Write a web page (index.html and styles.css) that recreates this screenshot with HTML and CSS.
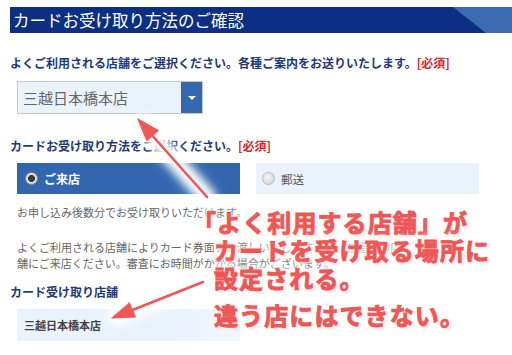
FILE: index.html
```html
<!DOCTYPE html>
<html lang="ja">
<head>
<meta charset="utf-8">
<title>カードお受け取り方法のご確認</title>
<link rel="stylesheet" href="styles.css">
</head>
<body>
<div class="page">
  <h1 class="title">カードお受け取り方法のご確認</h1>
  <p class="label q1">よくご利用される店舗をご選択ください。各種ご案内をお送りいたします。<span class="req">[必須]</span></p>
  <div class="select">
    <span class="select-text">三越日本橋本店</span>
    <span class="select-btn"><span class="caret"></span></span>
  </div>
  <p class="label q2">カードお受け取り方法をご選択ください。<span class="req">[必須]</span></p>
  <div class="radios">
    <div class="radio on"><span class="dot"></span><span>ご来店</span></div>
    <div class="radio off"><span class="dot"></span><span>郵送</span></div>
  </div>
  <p class="note">お申し込み後数分でお受け取りいただけます。</p>
  <p class="desc">よくご利用される店舗によりカード券面をお渡しいたしますので、ご指定の店<br>舗にご来店ください。審査にお時間がかかる場合がございます。</p>
  <p class="label q3">カード受け取り店舗</p>
  <div class="store">三越日本橋本店</div>

  <svg class="arrows" width="512" height="355" viewBox="0 0 512 355" aria-hidden="true">
    <defs>
      <filter id="glow" x="-50%" y="-50%" width="200%" height="200%">
        <feGaussianBlur stdDeviation="5"/>
      </filter>
    </defs>
    <g filter="url(#glow)" stroke="#fff" stroke-width="18" stroke-linecap="round">
      <line x1="207" y1="197" x2="142" y2="124"/>
      <line x1="203" y1="282" x2="116" y2="316"/>
    </g>
    <g fill="#ef5656" stroke="#ef5656" stroke-width="2.6" stroke-linecap="round">
      <line x1="207" y1="197" x2="150" y2="133"/>
      <polygon points="138,119 158.5,130.5 147,140.5" stroke-width="1"/>
      <line x1="203" y1="282" x2="130" y2="311"/>
      <polygon points="112,318 135.5,317 129.5,303" stroke-width="1"/>
    </g>
  </svg>

  <div class="callout">
    <span class="cl first">「よく利用する店舗」が</span>
    <span class="cl">カードを受け取る場所に</span>
    <span class="cl">設定される。</span>
    <span class="cl last">違う店にはできない。</span>
  </div>
</div>
</body>
</html>
```

FILE: styles.css
```css
* { box-sizing: border-box; }
html, body { margin: 0; padding: 0; background: #fff; }
body {
  font-family: "Noto Sans CJK JP", "Noto Sans", sans-serif;
  width: 512px;
  height: 355px;
  overflow: hidden;
}
.page {
  position: relative;
  width: 512px;
  height: 355px;
  padding-top: 7px;
}
.title {
  position: relative;
  margin: 0 0 0 10px;
  height: 26px;
  background: #0c2f83;
  color: #fff;
  font-weight: normal;
  font-size: 16.5px;
  line-height: 26px;
  padding-left: 3px;
  overflow: hidden;
}
.title::after {
  content: "";
  position: absolute;
  top: 0;
  right: 0;
  width: 59px;
  height: 100%;
  background: #3b6cb1;
  clip-path: polygon(0 0, 100% 0, 100% 100%, 33px 100%);
}
.label {
  margin: 0;
  padding-left: 10px;
  font-size: 12px;
  line-height: 16px;
  font-weight: bold;
  color: #1d3a7c;
}
.req { color: #d9232c; }
.q1 { margin-top: 22px; }
.select {
  margin: 10px 0 0 17px;
  width: 186px;
  height: 33px;
  border: 1px solid #c4c8cf;
  background: #eaf2fb;
  display: flex;
  align-items: stretch;
}
.select-text {
  flex: 1;
  font-size: 15px;
  color: #666;
  line-height: 31px;
  padding-left: 5px;
}
.select-btn {
  width: 21px;
  background: #3467b1;
  display: flex;
  align-items: center;
  justify-content: center;
}
.caret {
  width: 0;
  height: 0;
  border-left: 4px solid transparent;
  border-right: 4px solid transparent;
  border-top: 4px solid #fff;
}
.q2 { margin-top: 24px; }
.radios {
  margin: 9px 0 0 17px;
  display: flex;
  gap: 16px;
}
.radio {
  width: 223px;
  height: 31px;
  display: flex;
  align-items: center;
  gap: 6px;
  padding-left: 8px;
}
.radio.on {
  background: #3267b0;
  color: #fff;
  font-weight: bold;
  font-size: 12px;
}
.radio.off {
  background: #eaf3fc;
  color: #555;
  font-size: 11.5px;
  padding-left: 6px;
}
.dot {
  width: 13px;
  height: 13px;
  border-radius: 50%;
  flex: none;
}
.radio.on .dot {
  background: radial-gradient(circle, #3a3a3a 0 3.2px, #e6e6e6 3.8px, #bdbdbd 100%);
  border: 1px solid #8f8f8f;
}
.radio.off .dot {
  background: radial-gradient(circle at 40% 35%, #f4f4f4, #cfcfcf);
  border: 1px solid #b9b9b9;
}
.note {
  margin: 10px 0 0 17px;
  font-size: 11px;
  line-height: 16px;
  color: #666;
}
.desc {
  margin: 19px 0 0 17px;
  font-size: 11px;
  line-height: 16px;
  color: #666;
}
.q3 { margin-top: 13px; }
.store {
  margin: 9px 0 0 17px;
  width: 223px;
  height: 32px;
  background: linear-gradient(90deg, #eaf2fb 70%, #f2f7fd);
  font-size: 11px;
  font-weight: bold;
  color: #444;
  line-height: 32px;
  padding-left: 7px;
}
.arrows {
  position: absolute;
  left: 0;
  top: 0;
  pointer-events: none;
}
.callout {
  position: absolute;
  left: 214px;
  top: 208px;
  display: flex;
  flex-direction: column;
  font-weight: bold;
  font-size: 24px;
  letter-spacing: 1.1px;
  line-height: 28px;
  color: #ef5656;
  -webkit-text-stroke: 0.9px #ef5656;
  white-space: nowrap;
  text-shadow:
    0 0 2px #fff, 0 0 3px #fff, 0 0 6px #fff, 0 0 10px #fff, 0 0 14px #fff,
    2px 2px 3px rgba(0,0,0,0.22);
}
.cl.first { margin-left: -22px; }
.cl.last { margin-top: 9px; }
```
